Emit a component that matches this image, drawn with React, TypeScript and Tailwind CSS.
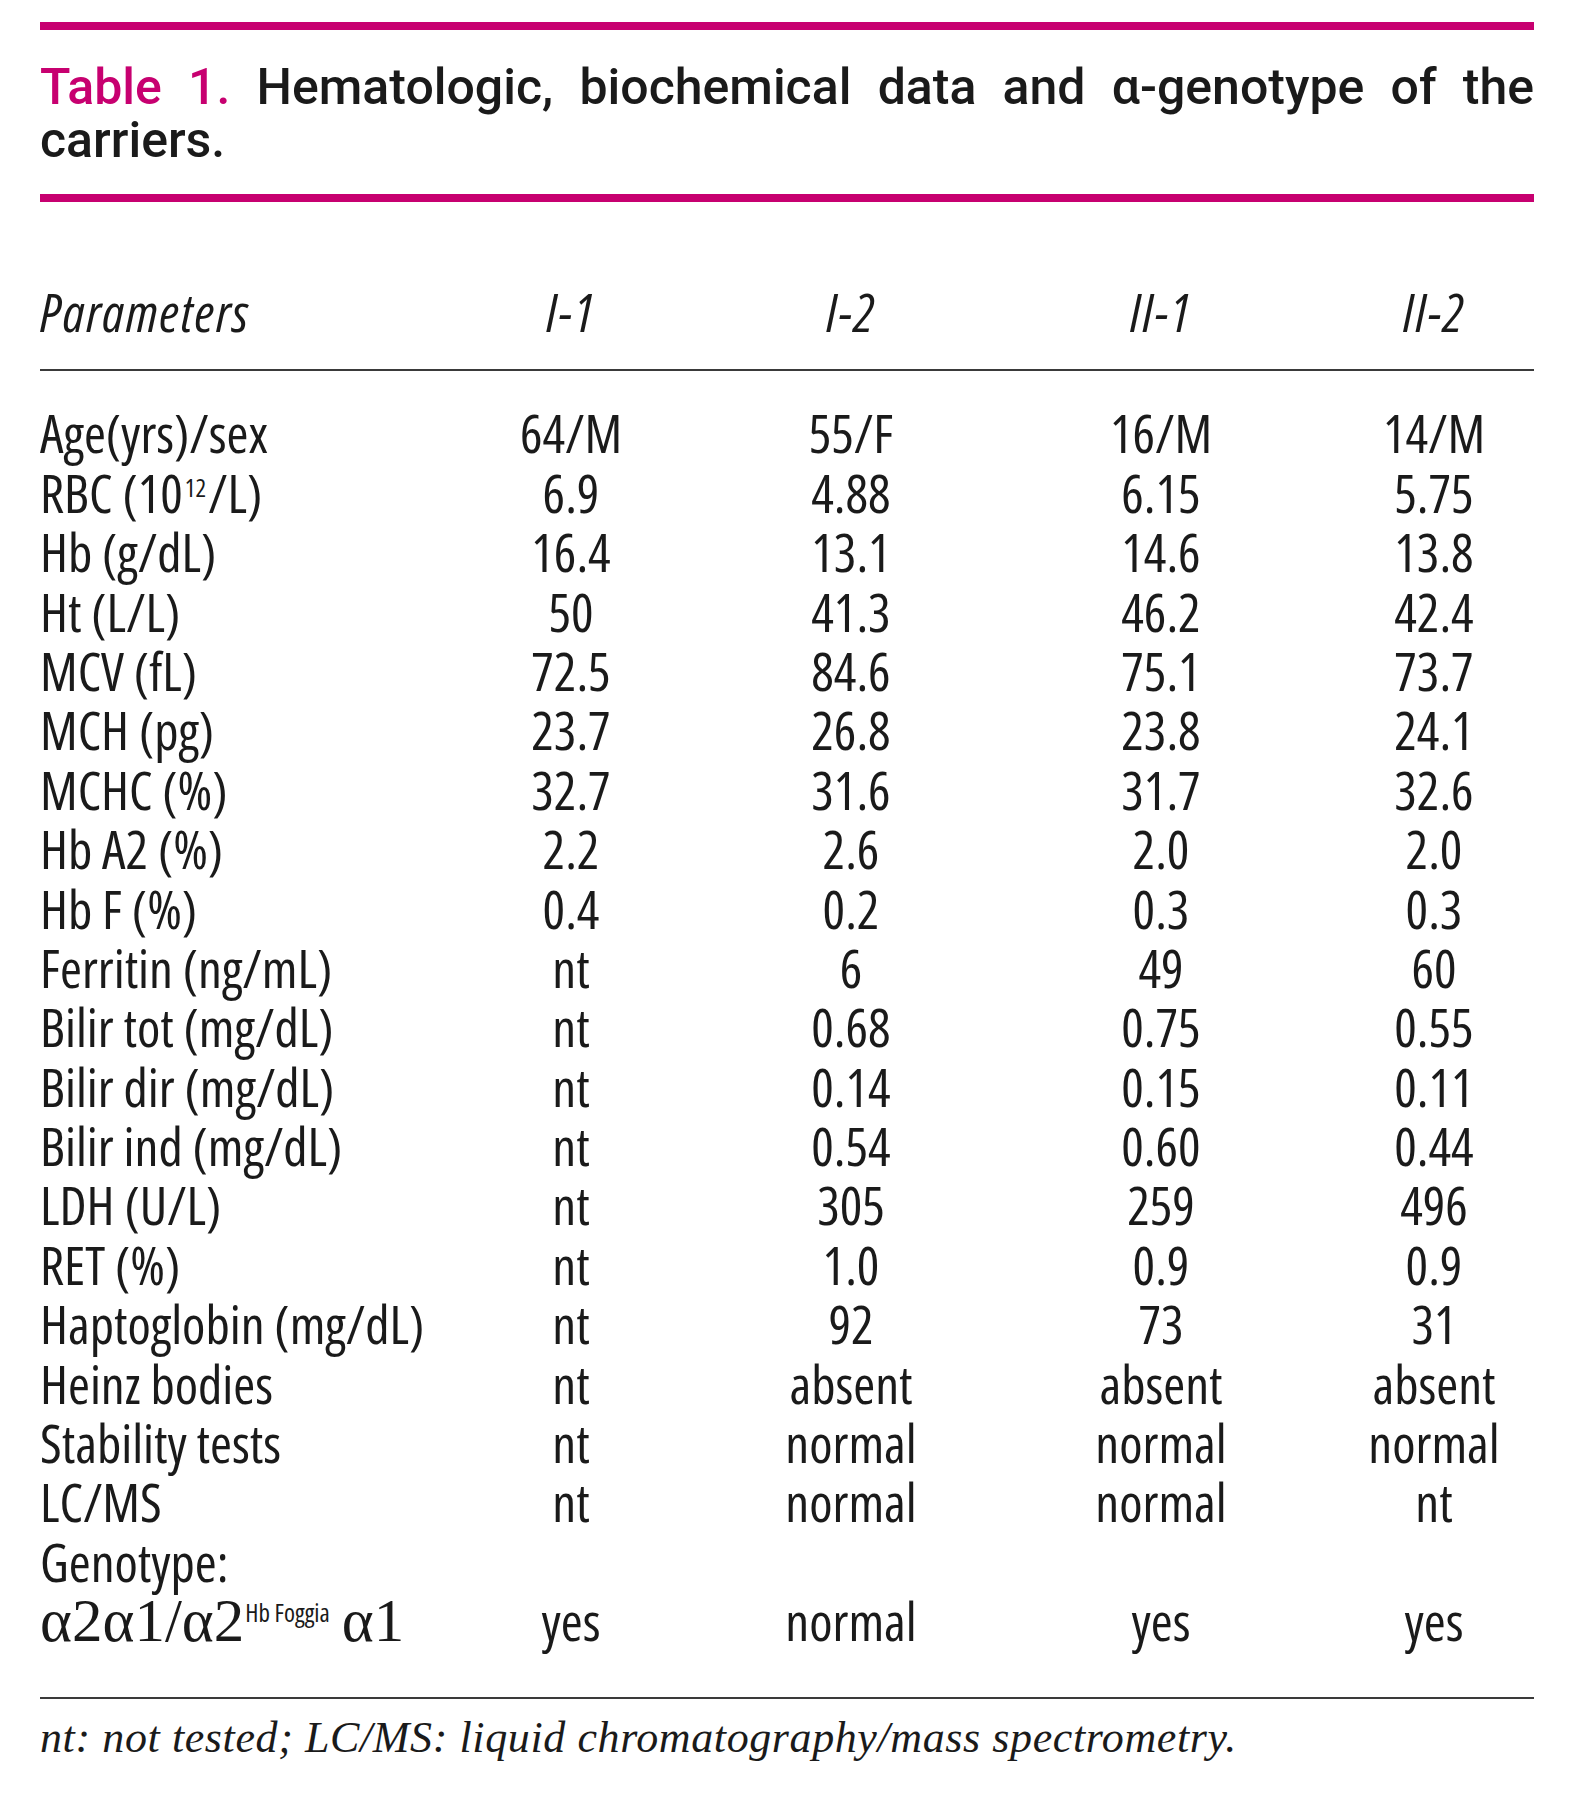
const columns = ['I-1', 'I-2', 'II-1', 'II-2'];

type Row = { label: React.ReactNode; values: string[] };

const rows: Row[] = [
  { label: 'Age(yrs)/sex', values: ['64/M', '55/F', '16/M', '14/M'] },
  {
    label: (
      <>
        RBC (10
        <span className="text-[25px] leading-none align-[16px] mx-[2px]">12</span>
        /L)
      </>
    ),
    values: ['6.9', '4.88', '6.15', '5.75'],
  },
  { label: 'Hb (g/dL)', values: ['16.4', '13.1', '14.6', '13.8'] },
  { label: 'Ht (L/L)', values: ['50', '41.3', '46.2', '42.4'] },
  { label: 'MCV (fL)', values: ['72.5', '84.6', '75.1', '73.7'] },
  { label: 'MCH (pg)', values: ['23.7', '26.8', '23.8', '24.1'] },
  { label: 'MCHC (%)', values: ['32.7', '31.6', '31.7', '32.6'] },
  { label: 'Hb A2 (%)', values: ['2.2', '2.6', '2.0', '2.0'] },
  { label: 'Hb F (%)', values: ['0.4', '0.2', '0.3', '0.3'] },
  { label: 'Ferritin (ng/mL)', values: ['nt', '6', '49', '60'] },
  { label: 'Bilir tot (mg/dL)', values: ['nt', '0.68', '0.75', '0.55'] },
  { label: 'Bilir dir (mg/dL)', values: ['nt', '0.14', '0.15', '0.11'] },
  { label: 'Bilir ind (mg/dL)', values: ['nt', '0.54', '0.60', '0.44'] },
  { label: 'LDH (U/L)', values: ['nt', '305', '259', '496'] },
  { label: 'RET (%)', values: ['nt', '1.0', '0.9', '0.9'] },
  { label: 'Haptoglobin (mg/dL)', values: ['nt', '92', '73', '31'] },
  { label: 'Heinz bodies', values: ['nt', 'absent', 'absent', 'absent'] },
  { label: 'Stability tests', values: ['nt', 'normal', 'normal', 'normal'] },
  { label: 'LC/MS', values: ['nt', 'normal', 'normal', 'nt'] },
  { label: 'Genotype:', values: ['', '', '', ''] },
  {
    label: (
      <>
        <span className="font-['Liberation_Serif',serif] text-[61px]">α2α1/α2</span>
        <span className="text-[25px] leading-none align-[19px] ml-[1px]">Hb Foggia</span>
        <span className="font-['Liberation_Serif',serif] text-[61px] ml-[12px]">α1</span>
      </>
    ),
    values: ['yes', 'normal', 'yes', 'yes'],
  },
];

const gridCols = 'grid grid-cols-[411px_240px_320px_300px_246px]';

export default function App() {
  return (
    <div className="w-[1574px] h-[1800px] bg-white pl-[40px] pt-[22px] text-[#1a1a1a]">
      <div className="w-[1494px]">
        {/* top rule */}
        <div className="h-[8px] bg-[#c70070]" />

        {/* caption */}
        <div className="mt-[31px] font-['Roboto',sans-serif] font-medium text-[50px] leading-[53px]">
          <div className="whitespace-nowrap text-justify [text-align-last:justify]">
            <span className="text-[#c70070]">Table 1.</span> Hematologic, biochemical data and α-genotype of the
          </div>
          <div>carriers.</div>
        </div>

        <div className="mt-[27px] h-[8px] bg-[#c70070]" />

        {/* table */}
        <div className="font-['Open_Sans',sans-serif] [font-stretch:75%] text-[53px] leading-[59.4px]">
          <div className={`${gridCols} mt-[80px] italic h-[59.4px] tracking-[1.5px]`}>
            <div>Parameters</div>
            {columns.map((c) => (
              <div key={c} className="text-center">
                {c}
              </div>
            ))}
          </div>

          <div className="mt-[28px] h-[2px] bg-[#3a3a3a]" />

          <div className="mt-[32px]">
            {rows.map((r, i) => (
              <div key={i} className={`${gridCols} h-[59.4px]`}>
                <div className="whitespace-nowrap">{r.label}</div>
                {r.values.map((v, j) => (
                  <div key={j} className="text-center whitespace-nowrap">
                    {v}
                  </div>
                ))}
              </div>
            ))}
          </div>
        </div>

        <div className="mt-[46px] h-[2px] bg-[#3a3a3a]" />

        {/* footnote */}
        <div className="mt-[17px] font-['Liberation_Serif',serif] italic text-[44px] leading-[44px] tracking-[0.6px] whitespace-nowrap">
          nt: not tested; LC/MS: liquid chromatography/mass spectrometry.
        </div>
      </div>
    </div>
  );
}
